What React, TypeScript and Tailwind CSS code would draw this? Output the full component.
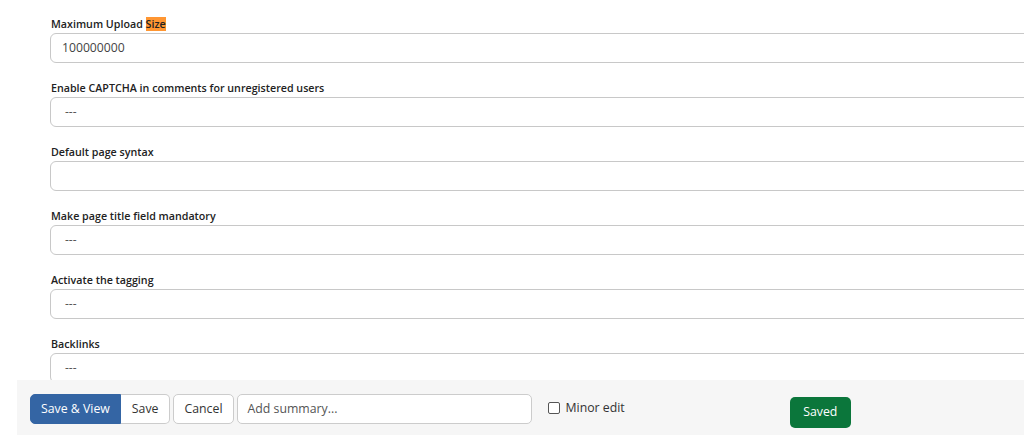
import React from "react";

const fields: { label: React.ReactNode; value: string; dash?: boolean }[] = [
  {
    label: (
      <>
        Maximum Upload <span className="bg-[#ff9632]">Size</span>
      </>
    ),
    value: "100000000",
  },
  { label: "Enable CAPTCHA in comments for unregistered users", value: "---", dash: true },
  { label: "Default page syntax", value: "" },
  { label: "Make page title field mandatory", value: "---", dash: true },
  { label: "Activate the tagging", value: "---", dash: true },
  { label: "Backlinks", value: "---", dash: true },
];

export default function App() {
  return (
    <div
      className="relative h-[435px] w-[1024px] overflow-hidden bg-white text-[#333]"
      style={{ fontFamily: '"Open Sans", "Noto Sans", sans-serif' }}
    >
      <div className="flex flex-col pl-[50px] pt-[16px]">
        {fields.map((f, i) => (
          <div key={i} className="flex flex-col">
            <div className="h-[17px] pl-[1px] text-[10.7px] font-semibold leading-[16px] text-[#222]">
              {f.label}
            </div>
            <div className="mr-[-20px] flex h-[30px] items-center rounded-[6px] border border-[#c8c8c8] bg-white">
              <span
                className={
                  f.dash
                    ? "pl-[14px] text-[12px] text-[#555]"
                    : "pl-[11px] text-[12.2px] text-[#444]"
                }
              >
                {f.value}
              </span>
            </div>
            <div className="h-[17px]" />
          </div>
        ))}
      </div>
      <div className="absolute bottom-0 left-[17px] right-0 flex h-[55px] items-start bg-[#f6f6f6] pl-[13px] pt-[14px]">
        <div className="flex h-[30px]">
          <button className="h-full rounded-l-[5px] border border-[#3465a4] bg-[#3465a4] px-[10px] text-[12.3px] text-white">
            Save &amp; View
          </button>
          <button className="h-full rounded-r-[5px] border border-l-0 border-[#ccc] bg-white px-[11px] text-[12.3px] text-[#333]">
            Save
          </button>
        </div>
        <button className="ml-[3px] h-[30px] rounded-[5px] border border-[#ccc] bg-white px-[10px] text-[12.3px] text-[#333]">
          Cancel
        </button>
        <div className="ml-[3px] flex h-[30px] w-[295px] items-center rounded-[5px] border border-[#ccc] bg-white pl-[10px] text-[12.3px] text-[#555]">
          Add summary...
        </div>
        <label className="ml-[16px] flex h-[28px] items-center text-[12.3px] text-[#333]">
          <span className="mr-[6px] inline-block h-[12px] w-[12px] rounded-[2px] border border-[#555] bg-white" />
          Minor edit
        </label>
        <button className="ml-[165px] mt-[3px] h-[31px] rounded-[5px] bg-[#0b763b] px-[13.5px] text-[12.3px] text-white">
          Saved
        </button>
      </div>
    </div>
  );
}
